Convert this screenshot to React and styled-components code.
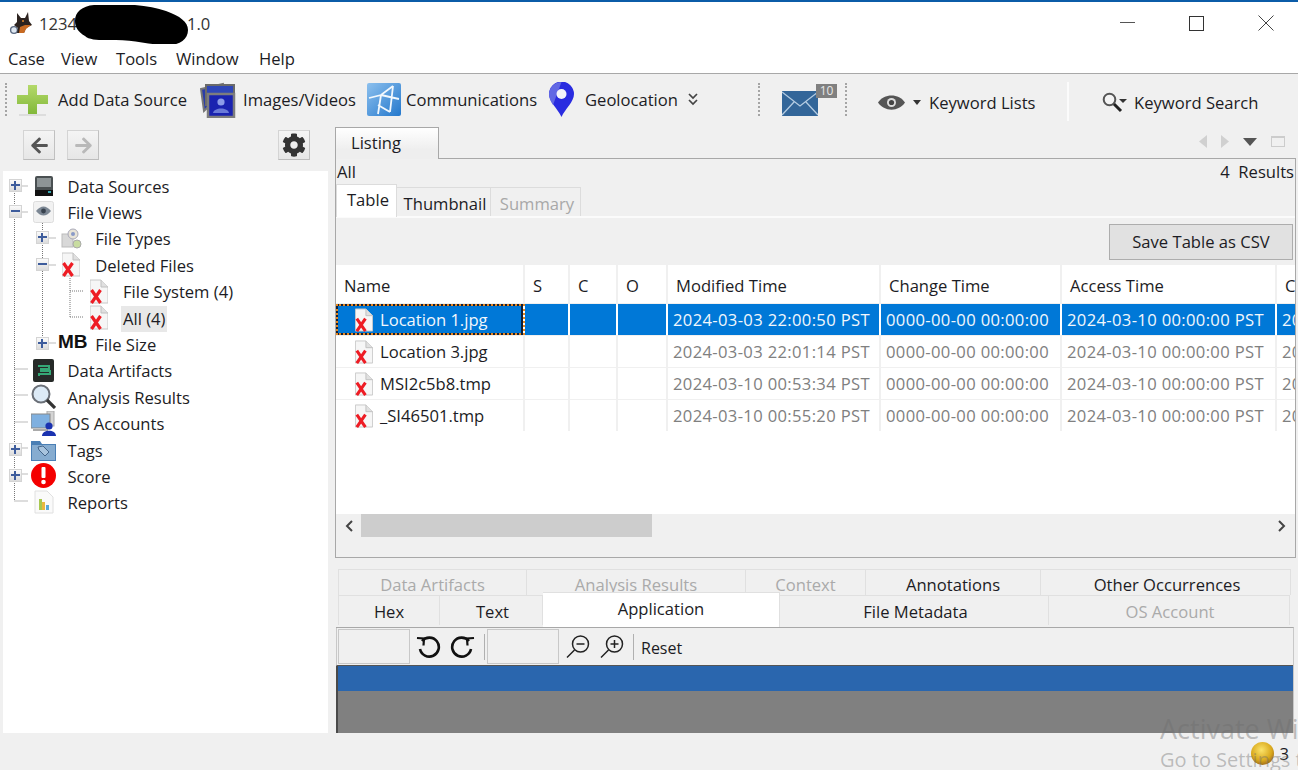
import styled, { createGlobalStyle } from "styled-components";
import { FaCog, FaArrowLeft, FaArrowRight } from "react-icons/fa";

const GlobalStyle = createGlobalStyle`
  html, body {
    margin: 0;
    padding: 0;
    overflow: hidden;
    background: #f0f0f0;
  }
  * { box-sizing: border-box; }
`;

const Shell = styled.div`
  position: relative;
  display: flex;
  flex-direction: column;
  width: 1298px;
  height: 770px;
  overflow: hidden;
  background: #f0f0f0;
  color: #1c1c24;
  font-family: "Open Sans", "Noto Sans", sans-serif;
  font-size: 16.6px;
`;

/* title + menu */
const TitleBar = styled.div`
  display: flex;
  align-items: center;
  height: 44px;
  flex: none;
  padding-left: 9px;
  background: #fff;
  border-top: 2px solid #0b5ca8;
`;
const TitleText = styled.span`
  margin-left: ${(p) => p.$ml || 0}px;
  color: #333;
`;
const Redaction = styled.svg`
  flex: none;
  width: 117px;
  height: 40px;
  margin: 4px -2px 0 -5px;
`;
const WindowControls = styled.div`
  display: flex;
  align-items: center;
  margin-left: auto;
  padding-right: 24px;
  gap: 54px;
`;
const MenuBar = styled.div`
  display: flex;
  align-items: center;
  flex: none;
  height: 30px;
  padding: 0 0 1px 8px;
  background: #fff;
  border-bottom: 1px solid #a8a8a8;
`;
const MenuItem = styled.span`
  width: ${(p) => p.$w}px;
`;

/* toolbar */
const Toolbar = styled.div`
  display: flex;
  align-items: center;
  flex: none;
  height: 51px;
  padding-left: 5px;
`;
const Grip = styled.div`
  flex: none;
  width: 2px;
  height: 33px;
  border-left: 2px dotted #a5a5a5;
`;
const ToolItem = styled.div`
  display: flex;
  align-items: center;
  flex: none;
  width: ${(p) => p.$w}px;
  margin-left: ${(p) => p.$ml || 0}px;
  padding-top: ${(p) => p.$down || 0}px;
  svg { flex: none; }
`;
const ToolLabel = styled.span`
  margin-left: ${(p) => p.$ml || 0}px;
  white-space: nowrap;
`;
const CaretSlot = styled.span`
  display: flex;
  margin: 0 ${(p) => p.$mr}px 0 ${(p) => p.$ml}px;
`;
const MailWrap = styled.div`
  position: relative;
  flex: none;
  width: 63px;
  margin-left: 22px;
  height: 32px;
  padding-top: 7px;
`;
const Badge = styled.span`
  position: absolute;
  left: 34px;
  top: 0;
  width: 21px;
  height: 14px;
  background: #808080;
  color: #e8e8e8;
  font-size: 12px;
  line-height: 14px;
  text-align: center;
`;
const WhiteRule = styled.div`
  flex: none;
  width: 2px;
  height: 39px;
  margin: 3px 33px 0 33px;
  background: #fbfbfb;
`;

/* left side */
const Body = styled.div`
  display: flex;
  flex: none;
  height: 608px;
`;
const LeftPanel = styled.div`
  display: flex;
  flex-direction: column;
  flex: none;
  width: 330px;
`;
const NavBar = styled.div`
  display: flex;
  align-items: center;
  flex: none;
  height: 46px;
  padding: 0 20px 6px 23px;
  gap: 12px;
`;
const NavButton = styled.button`
  display: flex;
  align-items: center;
  justify-content: center;
  width: 32px;
  height: 30px;
  margin-left: ${(p) => (p.$gear ? "auto" : "0")};
  padding: 0;
  border: 1px solid #d4d4d4;
  border-right-color: #c0c0c0;
  border-bottom-color: #bcbcbc;
  background: linear-gradient(#f4f4f4, #e6e6e6);
  color: ${(p) => (p.$off ? "#b9b9b9" : "#555")};
`;
const Tree = styled.div`
  position: relative;
  flex: 1;
  margin: 0 2px 0 3px;
  padding-top: 2.5px;
  background: #fff;
`;
const TreeLines = styled.svg`
  position: absolute;
  left: 0;
  top: 0;
`;
const TreeRow = styled.div`
  position: relative;
  display: flex;
  align-items: center;
  height: 26.4px;
  padding-left: ${(p) => 5.5 + p.$level * 27.75}px;
`;
const Expander = styled.span`
  position: relative;
  flex: none;
  width: 13px;
  height: 13px;
  margin-top: -3px;
  visibility: ${(p) => (p.$hidden ? "hidden" : "visible")};
  border: 1px solid #d4d4d4;
  background: linear-gradient(#fafafa, #dcdcdc);
  &::before {
    content: "";
    position: absolute;
    left: 1px;
    right: 1px;
    top: 4px;
    height: 2px;
    background: #3d5c9c;
  }
  &::after {
    content: "";
    position: absolute;
    display: ${(p) => (p.$open ? "none" : "block")};
    left: 4px;
    top: 1px;
    bottom: 1px;
    width: 2px;
    background: #3d5c9c;
  }
`;
const TreeIcon = styled.span`
  display: flex;
  align-items: center;
  justify-content: center;
  flex: none;
  width: 28px;
  height: 26px;
  margin-left: 8px;
  margin-top: -2px;
`;
const TreeLabel = styled.span`
  margin-left: 10px;
  padding: 0 ${(p) => (p.$selected ? "2px" : "0")};
  margin-right: ${(p) => (p.$selected ? "-2px" : "0")};
  transform: ${(p) => (p.$selected ? "translateX(-2px)" : "none")};
  background: ${(p) => (p.$selected ? "#e8e8e8" : "transparent")};
  line-height: 26px;
  white-space: nowrap;
`;
const MbIcon = styled.span`
  font-family: "Liberation Sans", Arial, sans-serif;
  font-weight: 700;
  font-size: 19px;
  margin: -5px 0 0 3px;
  color: #111;
`;

/* listing */
const RightPanel = styled.div`
  display: flex;
  flex-direction: column;
  flex: none;
  width: 961px;
  margin-left: 5px;
`;
const ListingStrip = styled.div`
  display: flex;
  flex: none;
  height: 34px;
  padding-top: 2px;
`;
const ListingTab = styled.div`
  flex: none;
  width: 104px;
  padding-left: 15px;
  line-height: 29px;
  border: 1px solid #a8a8a8;
  border-bottom: 0;
  background: linear-gradient(#fff, #eeeeee 70%);
`;
const StripRest = styled.div`
  display: flex;
  align-items: center;
  justify-content: flex-end;
  flex: 1;
  padding: 0 11px 2px 0;
  gap: 14px;
  border-bottom: 1px solid #a8a8a8;
`;
const ListingPanel = styled.div`
  display: flex;
  flex-direction: column;
  flex: none;
  height: 399px;
  border: 1px solid #a8a8a8;
  border-top: 0;
`;
const InfoRow = styled.div`
  display: flex;
  justify-content: space-between;
  flex: none;
  height: 26px;
  line-height: 26px;
  padding: 0 1px;
`;
const SubTabs = styled.div`
  display: flex;
  align-items: flex-end;
  flex: none;
  height: 33px;
  border-bottom: 2px solid #fbfbfb;
`;
const SubTab = styled.div`
  flex: none;
  width: ${(p) => p.$w}px;
  height: ${(p) => (p.$active ? 33 : 29)}px;
  margin-bottom: ${(p) => (p.$active ? -1 : 0)}px;
  padding-left: 3px;
  line-height: ${(p) => (p.$active ? 30 : 31)}px;
  text-align: center;
  background: ${(p) => (p.$active ? "#fff" : "#f0f0f0")};
  color: ${(p) => (p.$off ? "#a8a8a8" : "inherit")};
  border: 1px solid #dcdcdc;
  border-bottom: 0;
  border-left-width: ${(p) => (p.$first ? 1 : 0)}px;
`;
const ActionBar = styled.div`
  display: flex;
  align-items: center;
  justify-content: flex-end;
  flex: none;
  height: 47px;
  padding-right: 2px;
`;
const CsvButton = styled.button`
  width: 184px;
  height: 36px;
  padding: 0;
  border: 1px solid #adadad;
  background: #e1e1e1;
  color: inherit;
  font: inherit;
`;
const TableArea = styled.div`
  flex: none;
  height: 249px;
  overflow: hidden;
  background: #fff;
`;
const Row = styled.div`
  display: grid;
  grid-template-columns: 189px 45px 48px 50px 213px 181px 215px 20px;
  height: ${(p) => (p.$head ? 38 : 32)}px;
  white-space: nowrap;
  background: ${(p) => (p.$selected ? "#0078d7" : "#fff")};
  color: ${(p) => (p.$selected ? "#f2f7fc" : "inherit")};
  border-top: ${(p) => (p.$head ? "0" : "1px solid #f0f0f0")};
`;
const HeadCell = styled.div`
  display: flex;
  align-items: center;
  overflow: hidden;
  padding: 3px 0 0 8px;
  border-right: 2px solid #f0f0f0;
`;
const NameCell = styled.div`
  display: flex;
  align-items: center;
  overflow: hidden;
  padding-left: 19px;
  border-right: 2px solid ${(p) => (p.$selected ? "#fff" : "#f0f0f0")};
  outline: ${(p) => (p.$selected ? "2px dotted #e8871e" : "none")};
  outline-offset: -2px;
  box-shadow: ${(p) => (p.$selected ? "inset 0 0 0 2px #10203a" : "none")};
`;
const FileName = styled.span`
  margin-left: 7px;
`;
const Cell = styled.div`
  display: flex;
  align-items: center;
  overflow: hidden;
  padding-left: 5px;
  letter-spacing: 0.34px;
  color: ${(p) => (p.$selected ? "#f2f7fc" : "#808080")};
  border-right: 2px solid ${(p) => (p.$selected ? "#fff" : "#f0f0f0")};
`;
const ScrollBar = styled.div`
  display: flex;
  align-items: center;
  flex: none;
  height: 23px;
  padding: 0 9px;
  background: #f0f0f0;
`;
const ScrollThumb = styled.div`
  flex: none;
  width: 291px;
  height: 23px;
  margin-left: 7px;
  background: #cdcdcd;
`;
const ScrollEnd = styled.span`
  margin-left: auto;
  display: flex;
`;

/* lower tabs */
const DetailTabs = styled.div`
  display: flex;
  flex-direction: column;
  flex: none;
  margin-top: 11px;
  padding-left: 3px;
`;
const DetailRow = styled.div`
  display: flex;
  height: ${(p) => p.$h}px;
`;
const DetailTab = styled.div`
  position: relative;
  flex: none;
  width: ${(p) => p.$w}px;
  padding-left: ${(p) => p.$pl || 0}px;
  text-align: center;
  line-height: ${(p) => p.$lh || 32}px;
  color: ${(p) => (p.$off ? "#aaaaaa" : "inherit")};
  border: 1px solid #e0e0e0;
  border-bottom: 0;
  border-left-width: ${(p) => (p.$first ? 1 : 0)}px;
  background: #f0f0f0;
  overflow: hidden;
  ${(p) =>
    p.$active &&
    `
    height: 35px;
    margin-top: -3px;
    background: #fff;
    line-height: 32px;
    z-index: 1;
  `}
`;
const Viewer = styled.div`
  display: flex;
  flex-direction: column;
  flex: 1;
  width: 958px;
  margin: 2px 0 0 1px;
  border-top: 1px solid #a8a8a8;
  border-right: 1px solid #c8c8c8;
`;
const ViewerTools = styled.div`
  display: flex;
  align-items: center;
  flex: none;
  height: 38px;
  padding-left: 1px;
  border-left: 1px solid #c8c8c8;
  border-bottom: 1px solid #555;
`;
const ViewBox = styled.div`
  flex: none;
  width: 72px;
  height: 35px;
  margin-left: ${(p) => p.$ml || 0}px;
  border: 1px solid #c8c8c8;
`;
const ToolSep = styled.div`
  flex: none;
  width: 1px;
  height: 26px;
  margin-left: ${(p) => p.$ml}px;
  background: #b0b0b0;
`;
const ToolGlyph = styled.svg`
  flex: none;
  margin-left: ${(p) => p.$ml}px;
`;
const ResetLabel = styled.span`
  margin-left: 7px;
  padding-top: 2px;
  font-size: 16px;
`;
const BlueBand = styled.div`
  flex: none;
  height: 25px;
  background: #2a66ae;
  border-left: 2px solid #4a4a4a;
`;
const GreyBand = styled.div`
  flex: 1;
  background: #808080;
  border-left: 2px solid #4a4a4a;
`;
const StatusBar = styled.div`
  display: flex;
  align-items: center;
  justify-content: flex-end;
  flex: none;
  height: 37px;
  padding: 4px 9px 0 0;
  gap: 5px;
`;
const Watermark = styled.div`
  position: absolute;
  left: 1160px;
  top: ${(p) => p.$top}px;
  color: rgba(110, 110, 110, 0.42);
  font-size: ${(p) => p.$size}px;
  white-space: nowrap;
`;

/* drawings */
const Dog = () => (
  <svg width="26" height="24" viewBox="0 0 26 24">
    <circle cx="5" cy="19" r="3.4" fill="#dfe8f2" stroke="#5b6a82" strokeWidth="1.4" />
    <path d="M8 2l4 5h4l3-6 1 9 3 4-6 3-2 5H8l1-5-4-3 3-3z" fill="#2c2320" />
    <path d="M11 16l5-2 6 0-5 4-2 4H10z" fill="#c86a22" />
    <circle cx="14" cy="10" r="1" fill="#e58a2c" />
  </svg>
);
const Minimize = () => (
  <svg width="15" height="2"><rect width="15" height="1" fill="#555" /></svg>
);
const Maximize = () => (
  <svg width="15" height="15"><rect x=".5" y=".5" width="14" height="14" fill="none" stroke="#333" /></svg>
);
const Close = () => (
  <svg width="16" height="16"><path d="M.5.5l15 15M15.5.5l-15 15" stroke="#444" fill="none" /></svg>
);
const PlusIcon = () => (
  <svg width="31" height="33" viewBox="0 0 31 33">
    <defs>
      <linearGradient id="plusFill" x1="0" y1="0" x2="0" y2="1">
        <stop offset="0" stopColor="#b4d96a" />
        <stop offset="1" stopColor="#82b83a" />
      </linearGradient>
    </defs>
    <path d="M11 2h9v10h11v9H20v10h-9V21H0v-9h11z" fill="url(#plusFill)" />
    <rect x="2" y="31" width="27" height="2" fill="#ddd" />
  </svg>
);
const ImagesIcon = () => (
  <svg width="36" height="36" viewBox="0 0 36 36">
    <path d="M1 7l22-5 2 7-21 20z" fill="#2b3da8" stroke="#777" strokeWidth="2" />
    <path d="M6 3h28v20H6z" fill="#2f47b8" stroke="#6a6a6a" strokeWidth="2" />
    <path d="M8 12h26v23H8z" fill="#1a23b0" stroke="#7d7d7d" strokeWidth="2.5" />
    <circle cx="21" cy="20" r="3.6" fill="#8c9ce8" />
    <path d="M13 31c1-6 15-6 16 0z" fill="#6a7ad8" />
  </svg>
);
const CommIcon = () => (
  <svg width="34" height="33" viewBox="0 0 34 33">
    <defs>
      <linearGradient id="commFill" x1="0" y1="0" x2="1" y2="1">
        <stop offset="0" stopColor="#8cc0ee" />
        <stop offset="1" stopColor="#2478cc" />
      </linearGradient>
    </defs>
    <rect width="34" height="33" rx="2" fill="url(#commFill)" />
    <path d="M2 15l12-3 12-9M14 12l-3 19M14 12l18 4M11 22l12 7M26 3l-3 26" stroke="#f2f8fd" strokeWidth="1.8" fill="none" />
  </svg>
);
const Pin = () => (
  <svg width="25" height="35" viewBox="0 0 25 35">
    <path d="M12.5 35C9 27 0 20 0 12a12.5 12.5 0 0 1 25 0c0 8-9 15-12.5 23z" fill="#2a2ce0" />
    <path d="M12.5 0A12.5 12.5 0 0 0 0 12c0 4 2 8 4 11L12.5 0z" fill="#6268e4" />
    <circle cx="12.5" cy="12" r="5" fill="#f4f4fa" />
  </svg>
);
const Chevrons = () => (
  <svg width="10" height="13" viewBox="0 0 10 13">
    <path d="M1 1l4 4 4-4M1 7l4 4 4-4" stroke="#444" strokeWidth="1.7" fill="none" />
  </svg>
);
const Mail = () => (
  <svg width="36" height="25" viewBox="0 0 36 25">
    <rect width="36" height="25" fill="#336699" />
    <path d="M0 1l18 14L36 1M0 24l12-13M36 24L24 11" stroke="#b4cce2" strokeWidth="1.3" fill="none" />
  </svg>
);
const Eye = () => (
  <svg width="27" height="15" viewBox="0 0 27 15">
    <path d="M0 7.5C6-2 21-2 27 7.5 21 17 6 17 0 7.5z" fill="#555" />
    <circle cx="13.5" cy="7.5" r="4.5" fill="#ddd" />
    <circle cx="13.5" cy="7.5" r="2.6" fill="#444" />
  </svg>
);
const Caret = () => (
  <svg width="8" height="5"><path d="M0 0h8L4 5z" fill="#333" /></svg>
);
const SearchCaret = () => (
  <svg width="25" height="21" viewBox="0 0 25 21">
    <circle cx="7.5" cy="7.5" r="5.8" fill="#f4f4f4" stroke="#555" strokeWidth="2" />
    <path d="M12 12l7 7" stroke="#222" strokeWidth="3" />
    <path d="M17 7h8l-4 4z" fill="#333" />
  </svg>
);
const StripArrow = ({ dir }) => (
  <svg width="8" height="13" viewBox="0 0 8 13">
    <path d={dir === "left" ? "M8 0v13L0 6.5z" : "M0 0v13l8-6.5z"} fill="#d0d0d0" />
  </svg>
);
const StripDown = () => (
  <svg width="14" height="8"><path d="M0 0h14L7 8z" fill="#555" /></svg>
);
const StripWindow = () => (
  <svg width="14" height="11"><rect x=".5" y=".5" width="13" height="10" fill="none" stroke="#ccc" /><rect y="0" width="14" height="2" fill="#ccc" /></svg>
);
const Deleted = ({ w = 18, h = 25 }) => (
  <svg width={w} height={h} viewBox="0 0 18 25">
    <path d="M0 1h11l7 7v16H0z" fill="#f6f6f6" stroke="#c8c8c8" />
    <path d="M11 1v7h7" fill="#e0e0e0" stroke="#c0c0c0" />
    <path d="M1.5 11l9 13M10.5 11l-9 13" stroke="#ee1c24" strokeWidth="3.2" fill="none" />
  </svg>
);
const Disk = () => (
  <svg width="20" height="20" viewBox="0 0 20 20">
    <rect x="1" y="0" width="18" height="20" rx="2" fill="#4a5052" />
    <rect x="3" y="2" width="14" height="9" fill="#8d9496" />
    <rect x="1" y="14" width="18" height="6" fill="#111" />
    <rect x="14" y="15" width="3" height="2" fill="#37a8b0" />
  </svg>
);
const EyeBox = () => (
  <svg width="21" height="22" viewBox="0 0 21 22">
    <rect x=".5" y=".5" width="20" height="21" rx="2" fill="#f2f2f2" stroke="#ddd" />
    <path d="M3 10c5-6 10-6 15 0-5 6-10 6-15 0z" fill="#7c8794" />
    <circle cx="10.5" cy="10" r="2.4" fill="#38424e" />
  </svg>
);
const FileTypes = () => (
  <svg width="21" height="21" viewBox="0 0 21 21">
    <rect x="1" y="6" width="11" height="13" fill="#d8d8d8" stroke="#bbb" />
    <circle cx="12" cy="6" r="5" fill="#e8e4d8" stroke="#a9a9b9" />
    <circle cx="12" cy="6" r="2" fill="#8a9ac8" />
    <circle cx="16" cy="16" r="4" fill="#c8dca0" stroke="#aaa" />
  </svg>
);
const Artifacts = () => (
  <svg width="21" height="23" viewBox="0 0 21 23">
    <rect width="21" height="23" rx="2" fill="#262a28" />
    <path d="M5 7h11v3H8v2h9v3H6v2" stroke="#35a876" strokeWidth="2" fill="none" />
  </svg>
);
const BigGlass = () => (
  <svg width="25" height="25" viewBox="0 0 25 25">
    <circle cx="10" cy="10" r="8.5" fill="#dceaf6" stroke="#6b7078" strokeWidth="2" />
    <path d="M16 16l8 8" stroke="#333" strokeWidth="3.2" />
  </svg>
);
const Accounts = () => (
  <svg width="25" height="25" viewBox="0 0 25 25">
    <rect x="16" y="0" width="7" height="15" fill="#d4d4d4" stroke="#aaa" />
    <rect x="0" y="3" width="19" height="14" fill="#7fb0e0" stroke="#888" />
    <rect x="2" y="18" width="15" height="2" fill="#aaa" />
    <circle cx="18" cy="15" r="3.6" fill="#1a32b0" />
    <path d="M11 25c0-7 14-7 14 0z" fill="#1a32b0" />
  </svg>
);
const TagFolder = () => (
  <svg width="25" height="22" viewBox="0 0 25 22">
    <path d="M0 2h9l2 3h14v17H0z" fill="#4a7fb5" />
    <path d="M1 6h23v15H1z" fill="#86acd0" />
    <path d="M7 8l5-1 6 6-4 4-6-6z" fill="#a8c4de" stroke="#44658a" />
  </svg>
);
const ScoreIcon = () => (
  <svg width="25" height="25" viewBox="0 0 25 25">
    <circle cx="12.5" cy="12.5" r="12.5" fill="#f40000" />
    <rect x="10.5" y="4" width="4" height="11" rx="1" fill="#fff" />
    <circle cx="12.5" cy="19" r="2.3" fill="#fff" />
  </svg>
);
const Report = () => (
  <svg width="20" height="24" viewBox="0 0 20 24">
    <path d="M1 1h12l6 6v16H1z" fill="#fafafa" stroke="#e0e0e0" />
    <rect x="5" y="9" width="3" height="11" fill="#a8c850" />
    <rect x="8" y="12" width="3" height="8" fill="#e8b840" />
    <rect x="12" y="15" width="3" height="5" fill="#58a8d8" />
  </svg>
);
const ScrollArrow = ({ dir }) => (
  <svg width="9" height="12" viewBox="0 0 9 12">
    <path d={dir === "left" ? "M7 1L2 6l5 5" : "M2 1l5 5-5 5"} stroke="#444" strokeWidth="2" fill="none" />
  </svg>
);
const Coin = () => (
  <svg width="25" height="25" viewBox="0 0 25 25">
    <defs>
      <radialGradient id="coinFill" cx="0.45" cy="0.35" r="0.7">
        <stop offset="0" stopColor="#fbe36a" />
        <stop offset="0.65" stopColor="#d9a81c" />
        <stop offset="1" stopColor="#96631a" />
      </radialGradient>
    </defs>
    <circle cx="12.5" cy="12.5" r="11.5" fill="url(#coinFill)" />
  </svg>
);

const treeItems = [
  { level: 0, label: "Data Sources", icon: <Disk />, exp: "closed" },
  { level: 0, label: "File Views", icon: <EyeBox />, exp: "open" },
  { level: 1, label: "File Types", icon: <FileTypes />, exp: "closed" },
  { level: 1, label: "Deleted Files", icon: <Deleted w={18} h={25} />, exp: "open" },
  { level: 2, label: "File System (4)", icon: <Deleted w={18} h={25} /> },
  { level: 2, label: "All (4)", icon: <Deleted w={18} h={25} />, selected: true },
  { level: 1, label: "File Size", icon: <MbIcon>MB</MbIcon>, exp: "closed" },
  { level: 0, label: "Data Artifacts", icon: <Artifacts /> },
  { level: 0, label: "Analysis Results", icon: <BigGlass /> },
  { level: 0, label: "OS Accounts", icon: <Accounts /> },
  { level: 0, label: "Tags", icon: <TagFolder />, exp: "closed" },
  { level: 0, label: "Score", icon: <ScoreIcon />, exp: "closed" },
  { level: 0, label: "Reports", icon: <Report /> },
];

const tableRows = [
  { name: "Location 1.jpg", modified: "2024-03-03 22:00:50 PST", selected: true },
  { name: "Location 3.jpg", modified: "2024-03-03 22:01:14 PST" },
  { name: "MSI2c5b8.tmp", modified: "2024-03-10 00:53:34 PST" },
  { name: "_SI46501.tmp", modified: "2024-03-10 00:55:20 PST" },
];

const headers = ["Name", "S", "C", "O", "Modified Time", "Change Time", "Access Time", "C"];

const App = () => {
  return (
    <Shell>
      <GlobalStyle />
      <TitleBar>
        <Dog />
        <TitleText $ml={4}>1234</TitleText>
        <Redaction viewBox="0 0 117 40">
          <path d="M3 16C3 7 10 1 22 0c30-2 55 0 72 6 14 5 22 11 22 19 0 9-8 15-20 15-18 0-34-5-52-5-12 0-26 1-31-4C6 27 3 22 3 16z" fill="#000" />
        </Redaction>
        <TitleText>1.0</TitleText>
        <WindowControls>
          <Minimize />
          <Maximize />
          <Close />
        </WindowControls>
      </TitleBar>
      <MenuBar>
        <MenuItem $w={53}>Case</MenuItem>
        <MenuItem $w={55}>View</MenuItem>
        <MenuItem $w={60}>Tools</MenuItem>
        <MenuItem $w={83}>Window</MenuItem>
        <MenuItem $w={50}>Help</MenuItem>
      </MenuBar>
      <Toolbar>
        <Grip />
        <ToolItem $w={183} $ml={10}>
          <PlusIcon />
          <ToolLabel $ml={10}>Add Data Source</ToolLabel>
        </ToolItem>
        <ToolItem $w={167}>
          <ImagesIcon />
          <ToolLabel $ml={7}>Images/Videos</ToolLabel>
        </ToolItem>
        <ToolItem $w={182}>
          <CommIcon />
          <ToolLabel $ml={5}>Communications</ToolLabel>
        </ToolItem>
        <ToolItem $w={209}>
          <Pin />
          <ToolLabel $ml={11}>Geolocation</ToolLabel>
          <CaretSlot $ml={10} $mr={0}><Chevrons /></CaretSlot>
        </ToolItem>
        <Grip />
        <MailWrap>
          <Mail />
          <Badge>10</Badge>
        </MailWrap>
        <Grip />
        <ToolItem $w={156} $down={6} $ml={31}>
          <Eye />
          <CaretSlot $ml={8} $mr={8}><Caret /></CaretSlot>
          <ToolLabel>Keyword Lists</ToolLabel>
        </ToolItem>
        <WhiteRule />
        <ToolItem $w={160} $down={6}>
          <SearchCaret />
          <ToolLabel $ml={7}>Keyword Search</ToolLabel>
        </ToolItem>
      </Toolbar>
      <Body>
        <LeftPanel>
          <NavBar>
            <NavButton><FaArrowLeft size={19} /></NavButton>
            <NavButton $off><FaArrowRight size={19} /></NavButton>
            <NavButton $gear><FaCog size={24} color="#333" /></NavButton>
          </NavBar>
          <Tree>
            <TreeLines width="325" height="562" fill="none" stroke="#777" strokeDasharray="1 1">
              <path d="M11.5 20V330M39.5 52V175M67 107V146" />
              <path d="M11.5 15H25M11.5 41H25M39.5 67H53M39.5 94H53M67 120H81M67 146H81M39.5 172H53" />
              <path d="M11.5 198H25M11.5 224H25M11.5 251H25M11.5 277H25M11.5 303H25M11.5 330H25" />
            </TreeLines>
            {treeItems.map((item) => (
              <TreeRow key={item.label} $level={item.level}>
                <Expander $hidden={!item.exp} $open={item.exp === "open"} />
                <TreeIcon>{item.icon}</TreeIcon>
                <TreeLabel $selected={item.selected}>{item.label}</TreeLabel>
              </TreeRow>
            ))}
          </Tree>
        </LeftPanel>
        <RightPanel>
          <ListingStrip>
            <ListingTab>Listing</ListingTab>
            <StripRest>
              <StripArrow dir="left" />
              <StripArrow dir="right" />
              <StripDown />
              <StripWindow />
            </StripRest>
          </ListingStrip>
          <ListingPanel>
            <InfoRow>
              <span>All</span>
              <span>4&nbsp;&nbsp;Results</span>
            </InfoRow>
            <SubTabs>
              <SubTab $w={61} $active $first>Table</SubTab>
              <SubTab $w={94}>Thumbnail</SubTab>
              <SubTab $w={90} $off>Summary</SubTab>
            </SubTabs>
            <ActionBar>
              <CsvButton>Save Table as CSV</CsvButton>
            </ActionBar>
            <TableArea>
              <Row $head>
                {headers.map((h, i) => (
                  <HeadCell key={i}>{h}</HeadCell>
                ))}
              </Row>
              {tableRows.map((r) => (
                <Row key={r.name} $selected={r.selected}>
                  <NameCell $selected={r.selected}>
                    <Deleted w={18} h={24} />
                    <FileName>{r.name}</FileName>
                  </NameCell>
                  <Cell $selected={r.selected} />
                  <Cell $selected={r.selected} />
                  <Cell $selected={r.selected} />
                  <Cell $selected={r.selected}>{r.modified}</Cell>
                  <Cell $selected={r.selected}>0000-00-00 00:00:00</Cell>
                  <Cell $selected={r.selected}>2024-03-10 00:00:00 PST</Cell>
                  <Cell $selected={r.selected}>2024</Cell>
                </Row>
              ))}
            </TableArea>
            <ScrollBar>
              <ScrollArrow dir="left" />
              <ScrollThumb />
              <ScrollEnd><ScrollArrow dir="right" /></ScrollEnd>
            </ScrollBar>
          </ListingPanel>
          <DetailTabs>
            <DetailRow $h={26}>
              <DetailTab $w={189} $off $first $lh={30}>Data Artifacts</DetailTab>
              <DetailTab $w={219} $off $lh={30}>Analysis Results</DetailTab>
              <DetailTab $w={120} $off $lh={30}>Context</DetailTab>
              <DetailTab $w={175} $lh={30}>Annotations</DetailTab>
              <DetailTab $w={250} $pl={3} $lh={30}>Other Occurrences</DetailTab>
            </DetailRow>
            <DetailRow $h={30}>
              <DetailTab $w={102} $first>Hex</DetailTab>
              <DetailTab $w={103} $pl={3}>Text</DetailTab>
              <DetailTab $w={237} $active>Application</DetailTab>
              <DetailTab $w={269} $pl={3}>File Metadata</DetailTab>
              <DetailTab $w={241} $off $pl={2}>OS Account</DetailTab>
            </DetailRow>
          </DetailTabs>
          <Viewer>
            <ViewerTools>
              <ViewBox />
              <ToolGlyph $ml={5} width="26" height="24" viewBox="0 0 26 24" fill="none" stroke="#111" strokeWidth="2.6">
                <path d="M7 6a9.5 9.5 0 1 1-2 8" />
                <path d="M2 3l7 .5-.5 7" strokeWidth="2.2" />
              </ToolGlyph>
              <ToolGlyph $ml={9} width="26" height="24" viewBox="0 0 26 24" fill="none" stroke="#111" strokeWidth="2.6">
                <path d="M19 6a9.5 9.5 0 1 0 2 8" />
                <path d="M24 3l-7 .5.5 7" strokeWidth="2.2" />
              </ToolGlyph>
              <ToolSep $ml={8} />
              <ViewBox $ml={2} />
              <ToolGlyph $ml={6} width="26" height="26" viewBox="0 0 26 26" fill="none" stroke="#222" strokeWidth="1.5">
                <circle cx="15.5" cy="10" r="8" />
                <path d="M11.5 10h8M9.5 16L2 23.5" />
              </ToolGlyph>
              <ToolGlyph $ml={8} width="26" height="26" viewBox="0 0 26 26" fill="none" stroke="#222" strokeWidth="1.5">
                <circle cx="15.5" cy="10" r="8" />
                <path d="M11.5 10h8M15.5 6v8M9.5 16L2 23.5" />
              </ToolGlyph>
              <ToolSep $ml={8} />
              <ResetLabel>Reset</ResetLabel>
            </ViewerTools>
            <BlueBand />
            <GreyBand />
          </Viewer>
        </RightPanel>
      </Body>
      <StatusBar>
        <Coin />
        <span>3</span>
      </StatusBar>
      <Watermark $top={710} $size={27}>Activate Windows</Watermark>
      <Watermark $top={746} $size={20}>Go to Settings to activate Windows.</Watermark>
    </Shell>
  );
};

export default App;
